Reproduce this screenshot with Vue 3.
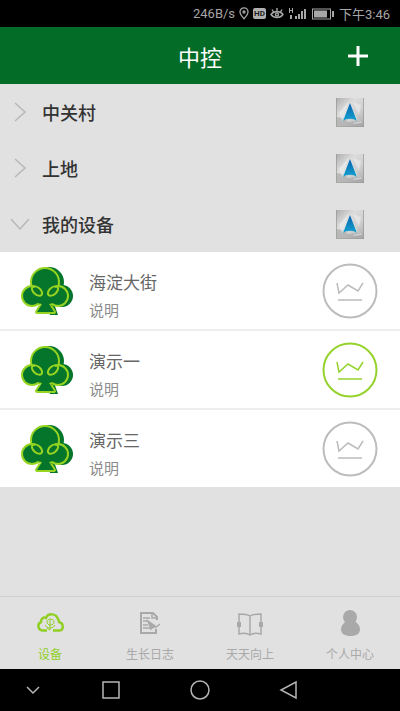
<!--
  App.vue - 中控设备列表页

  - 顶部：状态栏 + 标题栏
  - 中间：分组列表，展开的分组下显示设备
  - 底部：标签栏 + 系统导航键
-->
<template>
  <div class="page">
    <!-- 状态栏 -->
    <div class="status-bar">
      <span>246B/s</span>
      <svg width="10" height="13" viewBox="0 0 10 13" fill="none" stroke="currentColor" stroke-width="1.3">
        <path d="M5 11.8C3 9.3 1 7.3 1 4.9a4 4 0 0 1 8 0C9 7.3 7 9.3 5 11.8z" />
        <circle cx="5" cy="5" r="1" />
      </svg>
      <span class="hd">HD</span>
      <svg width="14" height="13" viewBox="0 0 14 13" fill="none" stroke="currentColor" stroke-width="1.4">
        <path d="M1 7.5c3-4 9-4 12 0-3 4-9 4-12 0zM7 4V1M3.5 5L2 2.5M10.5 5L12 2.5" />
        <circle cx="7" cy="7.5" r="1.5" />
      </svg>
      <svg width="20" height="13" viewBox="0 0 20 13" fill="currentColor">
        <path d="M1 1h1v2h2V1h1v5H4V4H2v2H1zM2 8h2v4H2zM7 9h2v3H7zM10 7h2v5h-2zM13 4h2v8h-2zM16 2h2v10h-2z" />
      </svg>
      <svg width="23" height="12" viewBox="0 0 23 12">
        <rect x="0.5" y="1" width="18" height="10" fill="none" stroke="currentColor" />
        <path d="M2 2.5h13v7H2zM20 3h2v6h-2z" fill="currentColor" />
      </svg>
      <span>下午3:46</span>
    </div>

    <!-- 标题栏 -->
    <header class="header">
      <h1 class="title">中控</h1>
      <button type="button" class="add" aria-label="添加">
        <svg width="20" height="20" viewBox="0 0 20 20" stroke="#fff" stroke-width="3">
          <path d="M10 0v20M0 10h20" />
        </svg>
      </button>
    </header>

    <main class="content">
      <section v-for="group in groups" :key="group.name">
        <div class="group">
          <button type="button" class="group-toggle" :aria-expanded="group.open" @click="group.open = !group.open">
            <svg class="arrow" :class="{ open: group.open }" width="20" height="20" viewBox="0 0 20 20" fill="none" stroke="#b8b8b8" stroke-width="1.5">
              <path d="M5 1l10 9-10 9" />
            </svg>
            <span>{{ group.name }}</span>
          </button>
          <button type="button" class="map" aria-label="地图">
            <svg width="30" height="30" viewBox="0 0 30 30">
              <defs>
                <linearGradient id="metal" x1="0" y1="0" x2="1" y2="1">
                  <stop offset="0" stop-color="#adadad" />
                  <stop offset="0.35" stop-color="#dcdcdc" />
                  <stop offset="0.65" stop-color="#cfcfcf" />
                  <stop offset="1" stop-color="#a8a8a8" />
                </linearGradient>
                <linearGradient id="needle" x1="0" y1="0" x2="0" y2="1">
                  <stop offset="0" stop-color="#0b62ae" />
                  <stop offset="1" stop-color="#16a3d0" />
                </linearGradient>
              </defs>
              <rect x="1" y="1" width="28" height="29" fill="url(#metal)" />
              <path d="M1 29v-9l7 1 5 4 14-1 1 5z" fill="#a4a4a4" opacity="0.6" />
              <path d="M4 16L14 4l-7 20zM18 5l8 3-2 10zM18 26l8-2 1 2-9 1z" fill="#f4f4f4" opacity="0.5" />
              <path d="M28.5 1v29M1 29.5h28M1.5 1v29" stroke="#999" opacity="0.7" />
              <path d="M15 5l8 19c-5-3-11-3-16 0z" fill="#e3ecef" opacity="0.7" />
              <path d="M15 6l7 18c-4-3-10-3-14 0z" fill="url(#needle)" />
            </svg>
          </button>
        </div>

        <ul v-if="group.open && group.devices.length" class="devices">
          <li v-for="device in group.devices" :key="device.name" class="device">
            <svg width="54" height="50" viewBox="0 0 54 50">
              <!-- 右侧投影 -->
              <g fill="#04752a">
                <circle cx="29" cy="16" r="15" />
                <circle cx="42" cy="30" r="11" />
                <path d="M26 32h6l6 17h-8z" />
              </g>
              <!-- 外轮廓 -->
              <g fill="#98d422" stroke="#98d422" stroke-width="4" stroke-linejoin="round">
                <circle cx="25" cy="16" r="13" />
                <circle cx="12" cy="30" r="9" />
                <circle cx="38" cy="30" r="9" />
                <path d="M12 24h26v12l-9 2 5 8H17l5-8-10-2z" />
              </g>
              <g fill="#04752a">
                <circle cx="25" cy="16" r="13" />
                <circle cx="12" cy="30" r="9" />
                <circle cx="38" cy="30" r="9" />
                <path d="M12 24h26v12l-9 2 5 8H17l5-8-10-2z" />
              </g>
              <!-- 花瓣交叠处 -->
              <g fill="none" stroke="#98d422" stroke-width="2">
                <ellipse cx="17" cy="25" rx="6" ry="3.5" transform="rotate(40 17 25)" />
                <ellipse cx="33" cy="25" rx="6" ry="3.5" transform="rotate(-40 33 25)" />
                <path d="M12 20l3 1M38 20l-3 1" />
              </g>
            </svg>
            <div class="info">
              <p class="name">{{ device.name }}</p>
              <p class="desc">说明</p>
            </div>
            <button type="button" class="chart" :class="{ active: device.active }" aria-label="曲线">
              <svg width="56" height="56" viewBox="0 0 56 56" fill="none" stroke="currentColor" stroke-width="1.5">
                <circle cx="28" cy="28" r="26.5" stroke-width="2" />
                <path d="M15 20l2 10 9-8 10 6 5-8M16 37h24" />
              </svg>
            </button>
          </li>
        </ul>
      </section>
    </main>

    <!-- 标签栏 -->
    <nav class="tabs">
      <a v-for="tab in tabs" :key="tab.id" href="#" class="tab" :class="{ current: tab.id === current }" @click.prevent="current = tab.id">
        <svg v-if="tab.id === 'device'" width="30" height="30" viewBox="0 0 30 30" fill="none" stroke="currentColor">
          <path d="M12 22.5H7a4.5 4.5 0 0 1-1-8.5c0-4 3-5 5-4 2-5 10-5 12 1 1 1 1 2 1 3 5 1 5 8.5 0 8.5h-6" stroke-width="2.5" />
          <path d="M12 14c0-4 7-4 7 0s-7 4-7 0zM10 17c2 4 8 4 10 0M15 11v11M12 20l3 2" stroke-width="1" />
        </svg>
        <svg v-else-if="tab.id === 'log'" width="30" height="30" viewBox="0 0 30 30" fill="none" stroke="currentColor">
          <path d="M22 12V9l-4-4H6v20h15v-4" stroke-width="2" />
          <path d="M17 5v5h5M8 10h7M8 13h5M8 17h5M8 20h7" stroke-width="1.5" />
          <path d="M13 13l7 5-4 3zM20 20l5-4" fill="currentColor" stroke-width="1.5" />
        </svg>
        <svg v-else-if="tab.id === 'learn'" width="30" height="30" viewBox="0 0 30 30" fill="none" stroke="currentColor" stroke-width="1.5">
          <path d="M15 8c-3-2-7-2-11-2v20c4-1 8-1 11 1 3-2 7-2 11-1V6c-4 0-8 0-11 2zM15 8v19" />
          <path d="M2 14h4v5H2zM24 14h4v5h-4z" fill="currentColor" stroke="none" />
        </svg>
        <svg v-else width="30" height="30" viewBox="0 0 30 30" fill="currentColor">
          <circle cx="15" cy="9" r="7" />
          <path d="M11 13h9c3 3 5 5 5 8 0 5-4 7-9.5 7S6 26 6 21c0-3 2-5 5-8z" />
        </svg>
        <span>{{ tab.label }}</span>
      </a>
    </nav>

    <!-- 系统导航键 -->
    <div class="system-nav">
      <button type="button" aria-label="收起">
        <svg width="20" height="20" viewBox="0 0 20 20"><path d="M4 7l6 6 6-6" /></svg>
      </button>
      <button type="button" aria-label="最近任务">
        <svg width="20" height="20" viewBox="0 0 20 20"><path d="M2 2h16v16H2z" /></svg>
      </button>
      <button type="button" aria-label="主页">
        <svg width="20" height="20" viewBox="0 0 20 20"><circle cx="10" cy="10" r="9" /></svg>
      </button>
      <button type="button" aria-label="返回">
        <svg width="20" height="20" viewBox="0 0 20 20"><path d="M17 2v16L2 10z" /></svg>
      </button>
    </div>
  </div>
</template>

<script setup>
import { reactive, ref } from 'vue';

const groups = reactive([
  { name: '中关村', open: false, devices: [] },
  { name: '上地', open: false, devices: [] },
  {
    name: '我的设备',
    open: true,
    devices: [
      { name: '海淀大街', active: false },
      { name: '演示一', active: true },
      { name: '演示三', active: false },
    ],
  },
]);

const tabs = [
  { id: 'device', label: '设备' },
  { id: 'log', label: '生长日志' },
  { id: 'learn', label: '天天向上' },
  { id: 'me', label: '个人中心' },
];
const current = ref('device');
</script>

<style>
body { margin: 0; background: #e1e1e1; }
</style>

<style scoped>
.page {
  display: flex;
  flex-direction: column;
  min-height: 100vh;
  background: #e1e1e1;
  font-family: Roboto, "Noto Sans CJK SC", sans-serif;
}
svg { display: block; flex: none; }
button {
  padding: 0;
  border: none;
  background: none;
  color: inherit;
  font: inherit;
  cursor: pointer;
}
.status-bar {
  display: flex;
  align-items: center;
  justify-content: flex-end;
  gap: 4px;
  height: 27px;
  padding-right: 10px;
  background: #000;
  color: #a6a6a6;
  font-size: 13px;
}
.hd {
  padding: 0 1px;
  border-radius: 2px;
  background: #b0b0b0;
  color: #222;
  font-size: 8px;
  font-weight: 700;
  line-height: 11px;
}
.header {
  display: grid;
  grid-template-columns: 1fr auto 1fr;
  align-items: center;
  height: 57px;
  background: #036d28;
  color: #fff;
}
.title {
  grid-column: 2;
  margin: 0;
  font-size: 22px;
  font-weight: 400;
}
.add { justify-self: end; margin-right: 32px; }
.content { flex: 1; }
.group {
  display: flex;
  align-items: center;
  height: 56px;
  padding-right: 35px;
}
.group-toggle {
  display: flex;
  flex: 1;
  align-items: center;
  gap: 12px;
  height: 100%;
  padding-left: 10px;
  color: #333;
  font-size: 18px;
  font-weight: 500;
  text-align: left;
}
.arrow.open { transform: rotate(90deg); }
.devices {
  display: flex;
  flex-direction: column;
  gap: 2px;
  margin: 0;
  padding: 0;
  list-style: none;
  background: #eee;
}
.device {
  display: flex;
  align-items: center;
  height: 77px;
  padding: 0 22px 0 20px;
  background: #fff;
}
.info { flex: 1; padding: 12px 0 0 15px; }
.name, .desc { margin: 0; line-height: 28px; }
.name { color: #666; font-size: 17px; }
.desc { color: #8c8c8c; font-size: 15px; }
.chart { color: #bcbcbc; }
.chart.active { color: #95d32c; }
.tabs {
  display: flex;
  height: 72px;
  border-top: 1px solid #cfcfcf;
}
.tab {
  display: flex;
  flex: 1;
  flex-direction: column;
  align-items: center;
  gap: 7px;
  padding-top: 11px;
  color: #a9a9a9;
  font-size: 12px;
  line-height: 20px;
  text-decoration: none;
}
.tab.current { color: #91cf25; }
.system-nav {
  display: grid;
  grid-template-columns: 66px 1fr 1fr 1fr 66px;
  align-items: center;
  justify-items: center;
  height: 42px;
  background: #000;
}
.system-nav svg { fill: none; stroke: #b5b5b5; stroke-width: 1.5; }
</style>
